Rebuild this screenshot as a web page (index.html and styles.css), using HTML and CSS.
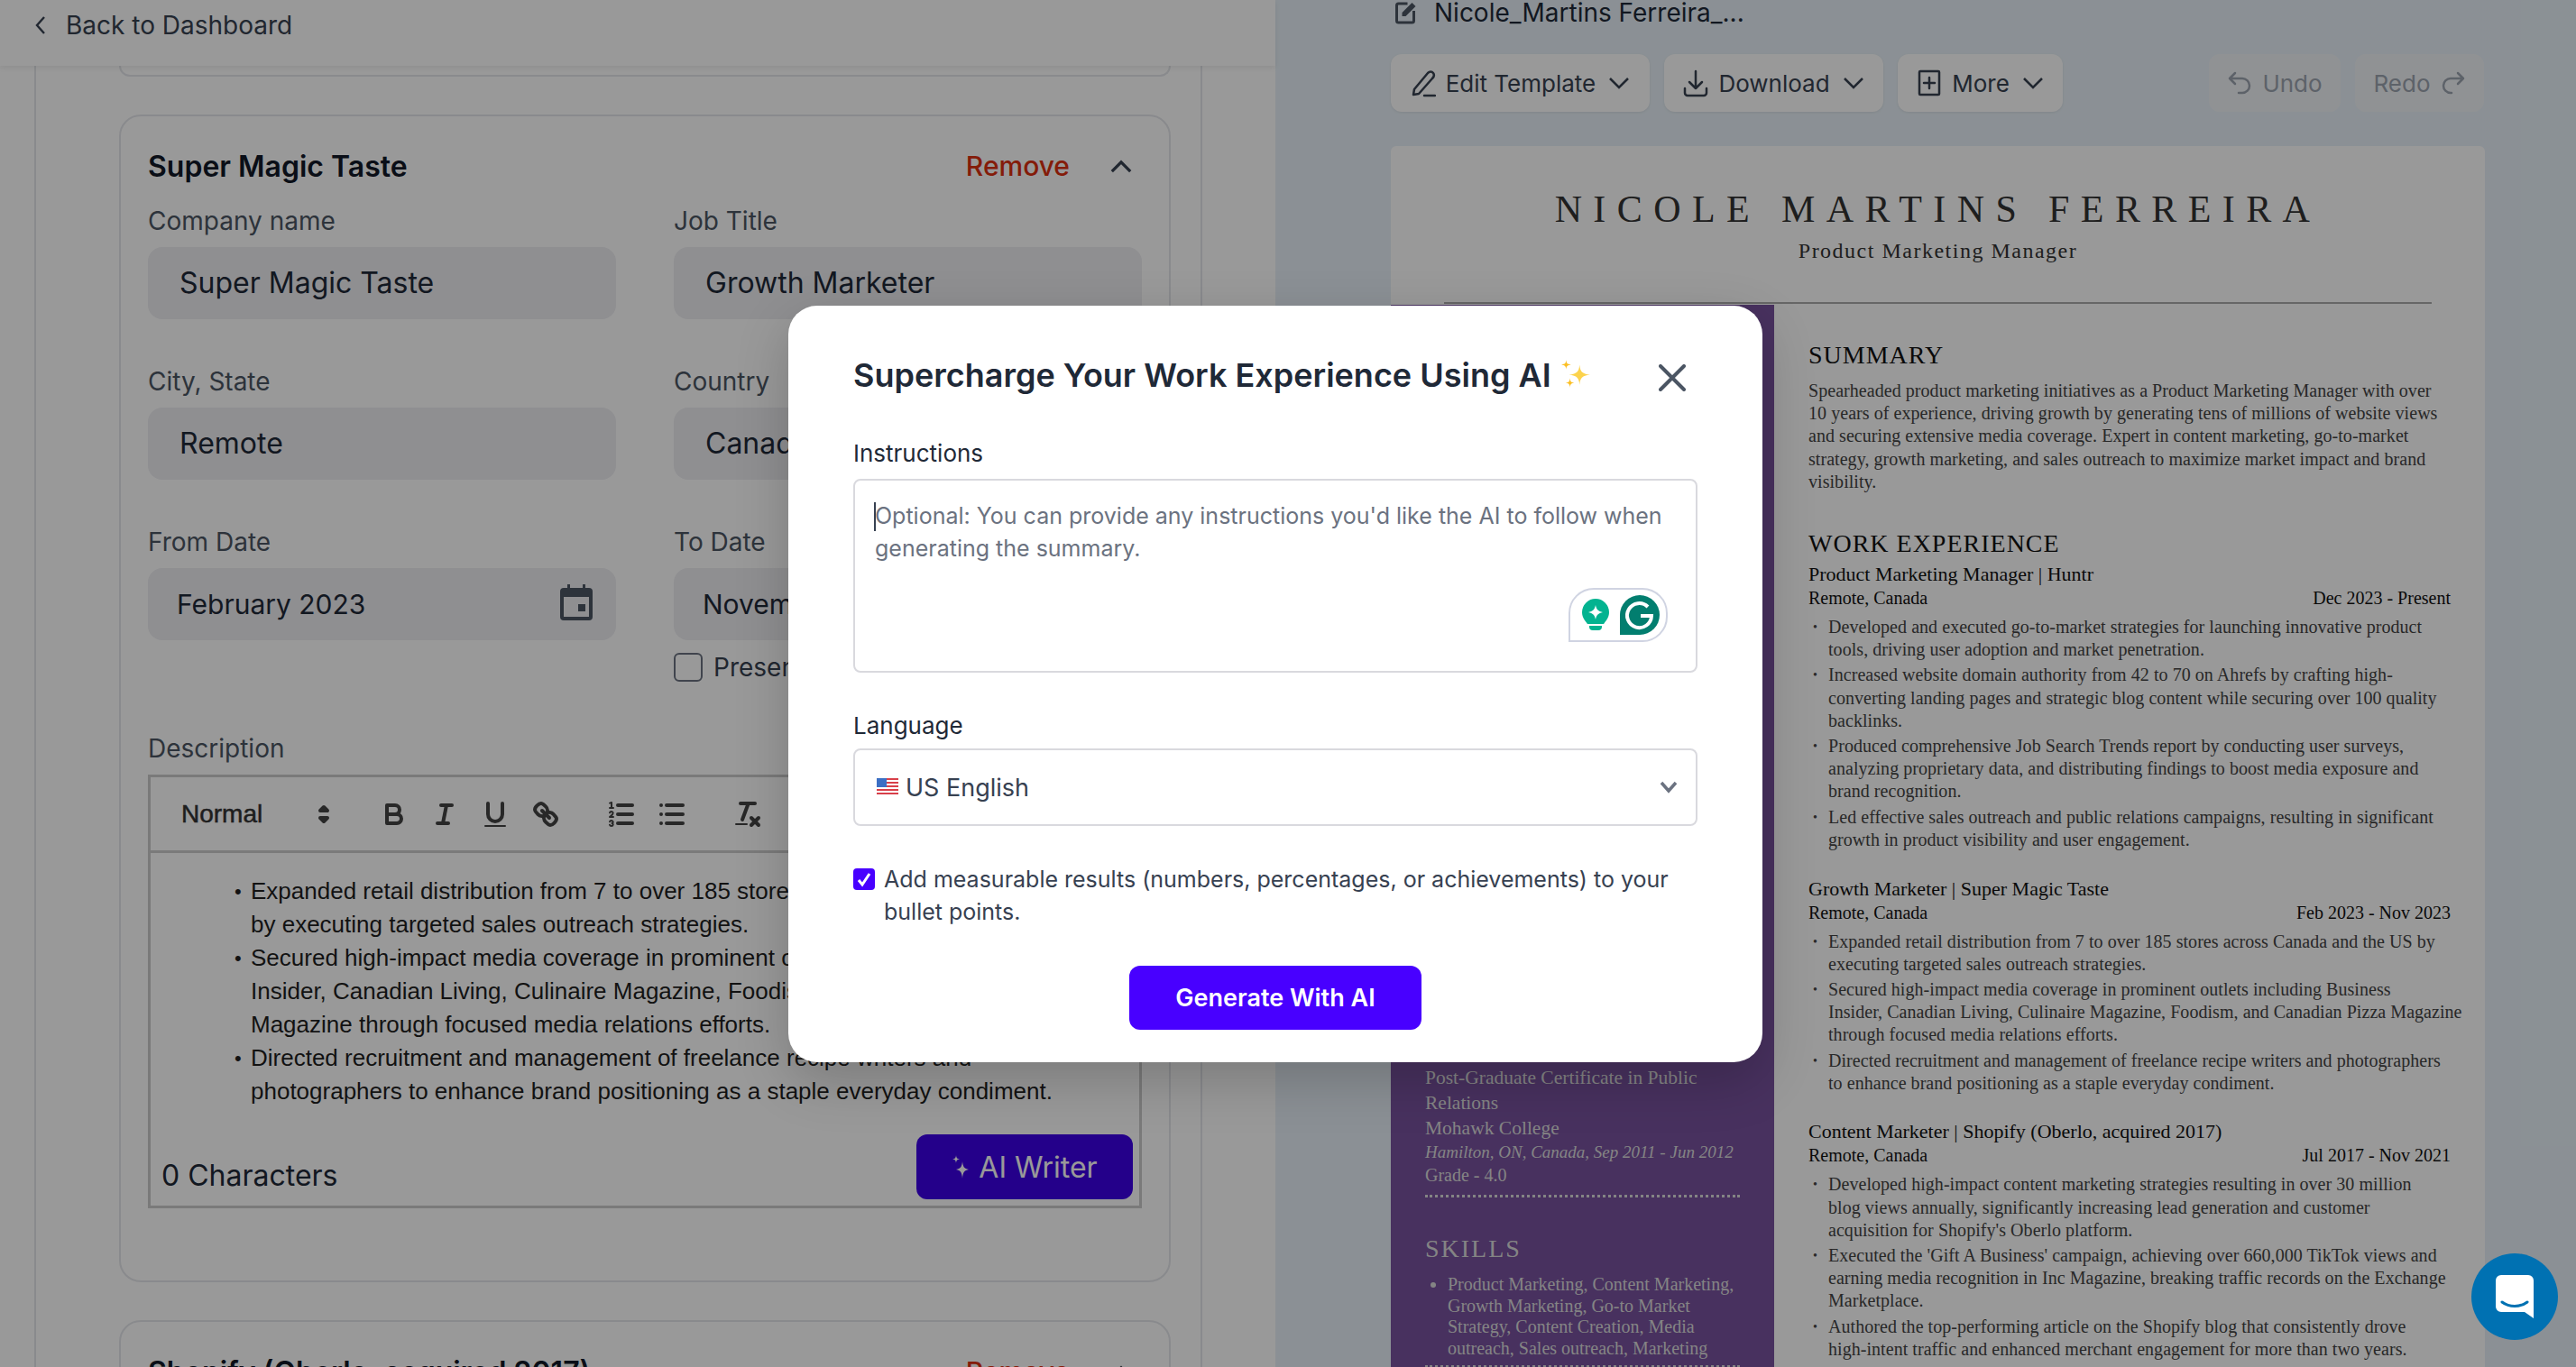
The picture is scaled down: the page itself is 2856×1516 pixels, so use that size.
FILE: index.html
```html
<!DOCTYPE html>
<html>
<head>
<meta charset="UTF-8">
<title>Resume Builder</title>
<link rel="stylesheet" href="styles.css">
</head>
<body>

<div class="app">

	<!-- left : form -->
	<div class="left">
		<div class="topbar">
			<svg class="back-icon" viewBox="0 0 16 28"><path d="M12 5 4 14l8 9"/></svg>
			<span>Back to Dashboard</span>
		</div>
		<div class="panel">
			<div class="card card-prev"></div>

			<div class="card">
				<div class="card-head">
					<div class="card-title">Super Magic Taste</div>
					<div class="remove">Remove</div>
					<svg class="card-chevron" viewBox="0 0 28 16"><path d="M3 14 14 3l11 11"/></svg>
				</div>
				<div class="fields">
					<div class="field">
						<div class="label">Company name</div>
						<div class="input">Super Magic Taste</div>
					</div>
					<div class="field">
						<div class="label">Job Title</div>
						<div class="input">Growth Marketer</div>
					</div>
					<div class="field">
						<div class="label">City, State</div>
						<div class="input">Remote</div>
					</div>
					<div class="field">
						<div class="label">Country</div>
						<div class="input">Canada</div>
					</div>
					<div class="field">
						<div class="label">From Date</div>
						<div class="input input-date">February 2023
							<svg class="cal-icon" viewBox="0 0 36 40"><path d="M8 0v4H4a4 4 0 0 0-4 4v28a4 4 0 0 0 4 4h28a4 4 0 0 0 4-4V8a4 4 0 0 0-4-4h-4V0h-3v4H11V0zM4 14h28v22H4z"/><rect x="20" y="22" width="8" height="8"/></svg>
						</div>
					</div>
					<div class="field">
						<div class="label">To Date</div>
						<div class="input input-date">November 2023</div>
						<div class="present"><span class="present-box"></span>Present</div>
					</div>
				</div>

				<div class="label label-desc">Description</div>
				<div class="editor">
					<div class="ql-bar">
						<div class="ql-picker">
							<span>Normal</span>
							<svg class="ql" viewBox="0 0 18 18"><polygon points="7 11 9 13 11 11 7 11"/><polygon points="7 7 9 5 11 7 7 7"/></svg>
						</div>
						<div class="ql-group">
							<svg class="ql" viewBox="0 0 18 18"><path d="M5,4H9.5A2.5,2.5,0,0,1,12,6.5v0A2.5,2.5,0,0,1,9.5,9H5A0,0,0,0,1,5,9V4A0,0,0,0,1,5,4Z"/><path d="M5,9h5.5A2.5,2.5,0,0,1,13,11.5v0A2.5,2.5,0,0,1,10.5,14H5a0,0,0,0,1,0,0V9A0,0,0,0,1,5,9Z"/></svg>
							<svg class="ql" viewBox="0 0 18 18"><line x1="7" x2="13" y1="4" y2="4"/><line x1="5" x2="11" y1="14" y2="14"/><line x1="8" x2="10" y1="14" y2="4"/></svg>
							<svg class="ql" viewBox="0 0 18 18"><path d="M5,3V9a4.012,4.012,0,0,0,4,4H9a4.012,4.012,0,0,0,4-4V3"/><rect class="ql-fill" height="1" rx=".5" ry=".5" width="12" x="3" y="15"/></svg>
							<svg class="ql" viewBox="0 0 18 18"><line x1="7" x2="11" y1="7" y2="11"/><path d="M8.9,4.577a3.476,3.476,0,0,1,.36,4.679A3.476,3.476,0,0,1,4.577,8.9C3.185,7.5,2.035,6.4,4.217,4.217S7.5,3.185,8.9,4.577Z"/><path d="M13.423,9.1a3.476,3.476,0,0,0-4.679-.36,3.476,3.476,0,0,0,.36,4.679c1.392,1.392,2.5,2.542,4.679.36S14.815,10.5,13.423,9.1Z"/></svg>
						</div>
						<div class="ql-group">
							<svg class="ql" viewBox="0 0 18 18"><line x1="7" x2="15" y1="4" y2="4"/><line x1="7" x2="15" y1="9" y2="9"/><line x1="7" x2="15" y1="14" y2="14"/><line class="ql-thin" x1="2.5" x2="4.5" y1="5.5" y2="5.5"/><path class="ql-fill" d="M3.5,6A0.5,0.5,0,0,1,3,5.5V3.085l-0.276.138A0.5,0.5,0,0,1,2.053,3c-0.124-.247-0.023-0.324.224-0.447l1-.5A0.5,0.5,0,0,1,4,2.5v3A0.5,0.5,0,0,1,3.5,6Z"/><path class="ql-thin" d="M4.5,10.5h-2c0-.234,1.85-1.076,1.85-2.234A0.959,0.959,0,0,0,2.5,8.156"/><path class="ql-thin" d="M2.5,14.846a0.959,0.959,0,0,0,1.85-.109A0.7,0.7,0,0,0,3.75,14a0.688,0.688,0,0,0,.6-0.736,0.959,0.959,0,0,0-1.85-.109"/></svg>
							<svg class="ql" viewBox="0 0 18 18"><line x1="6" x2="15" y1="4" y2="4"/><line x1="6" x2="15" y1="9" y2="9"/><line x1="6" x2="15" y1="14" y2="14"/><line x1="3" x2="3" y1="4" y2="4"/><line x1="3" x2="3" y1="9" y2="9"/><line x1="3" x2="3" y1="14" y2="14"/></svg>
						</div>
						<div class="ql-group">
							<svg class="ql" viewBox="0 0 18 18"><line x1="5" x2="13" y1="3" y2="3"/><line x1="6" x2="9.35" y1="12" y2="3"/><line x1="11" x2="15" y1="11" y2="15"/><line x1="15" x2="11" y1="11" y2="15"/><rect class="ql-fill" height="1" rx=".5" ry=".5" width="7" x="2" y="14"/></svg>
						</div>
					</div>
					<div class="ql-body">
						<ul class="ql-list">
							<li>Expanded retail distribution from 7 to over 185 stores across Canada and the US<br>by executing targeted sales outreach strategies.</li>
							<li>Secured high-impact media coverage in prominent outlets including Business<br>Insider, Canadian Living, Culinaire Magazine, Foodism, and Canadian Pizza<br>Magazine through focused media relations efforts.</li>
							<li>Directed recruitment and management of freelance recipe writers and<br>photographers to enhance brand positioning as a staple everyday condiment.</li>
						</ul>
						<div class="ql-foot">
							<div class="char-count">0 Characters</div>
							<div class="ai-writer">
								<svg class="ai-icon" viewBox="0 0 20 28"><path d="M12 8c.6 6 2 8 7 9-5 1-6.400 3-7 10-.6-7-2-9-7-10 5-1 6.400-3 7-9zM5 1c.3 3 1 4 4 4.500C6 6 5.300 7 5 10c-.3-3-1-4-4-4.500C4 5 4.700 4 5 1z"/></svg>
								AI Writer
							</div>
						</div>
					</div>
				</div>
			</div>

			<div class="card">
				<div class="card-head">
					<div class="card-title">Shopify (Oberlo, acquired 2017)</div>
					<div class="remove">Remove</div>
					<svg class="card-chevron" viewBox="0 0 28 16"><path d="M3 14 14 3l11 11"/></svg>
				</div>
			</div>
		</div>
	</div>

	<!-- right : preview -->
	<div class="right">
		<div class="file-row">
			<svg class="file-icon" viewBox="0 0 24 28"><path class="file-box" d="M14 5H4a2 2 0 0 0-2 2v17a2 2 0 0 0 2 2h15a2 2 0 0 0 2-2V13"/><path class="file-pen" d="M8 19v-4L19 4l4 4-11 11z"/></svg>
			<span>Nicole_Martins Ferreira_...</span>
		</div>

		<div class="actions">
			<div class="act-btn btn-edit">
				<svg class="act-icon" viewBox="0 0 28 32"><path d="M3 29l1-6L19 5c2-2 4.500-2 6 0s1 4-1 6L9 28z"/><path d="M15 30h12"/></svg>
				Edit Template
				<svg class="act-chev" viewBox="0 0 24 14"><path d="M2 2l10 10L22 2"/></svg>
			</div>
			<div class="act-btn btn-down">
				<svg class="act-icon" viewBox="0 0 28 32"><path d="M14 3v19M7 15l7 7 7-7M2 22v5a3 3 0 0 0 3 3h18a3 3 0 0 0 3-3v-5"/></svg>
				Download
				<svg class="act-chev" viewBox="0 0 24 14"><path d="M2 2l10 10L22 2"/></svg>
			</div>
			<div class="act-btn btn-more">
				<svg class="act-icon" viewBox="0 0 28 32"><rect x="3" y="3" width="22" height="26" rx="1"/><path d="M14 10v12M8 16h12"/></svg>
				More
				<svg class="act-chev" viewBox="0 0 24 14"><path d="M2 2l10 10L22 2"/></svg>
			</div>
			<div class="act-space"></div>
			<div class="act-btn act-off btn-undo">
				<svg class="act-icon" viewBox="0 0 28 32"><path d="M9 5 3 11l6 6M3 11h14a8 8 0 0 1 8 8v0a8 8 0 0 1-8 8h-4"/></svg>
				Undo
			</div>
			<div class="act-btn act-off btn-redo">
				Redo
				<svg class="act-icon" viewBox="0 0 28 32"><path d="M19 5l6 6-6 6M25 11H11a8 8 0 0 0-8 8v0a8 8 0 0 0 8 8h1"/></svg>
			</div>
		</div>

		<div class="sheet">
			<div class="sheet-head">
				<div class="res-name">NICOLE MARTINS FERREIRA</div>
				<div class="res-role">Product Marketing Manager</div>
				<div class="res-rule"></div>
			</div>
			<div class="sheet-body">
				<div class="side">
					<div class="edu">Post-Graduate Certificate in Public<br>Relations<br>Mohawk College</div>
					<div class="edu-place">Hamilton, ON, Canada, Sep 2011 - Jun 2012</div>
					<div class="edu-grade">Grade - 4.0</div>
					<div class="side-rule"></div>
					<div class="side-title">SKILLS</div>
					<ul class="skills">
						<li>Product Marketing, Content Marketing,<br>Growth Marketing, Go-to Market<br>Strategy, Content Creation, Media<br>outreach, Sales outreach, Marketing</li>
					</ul>
					<div class="side-rule side-rule2"></div>
				</div>
				<div class="main">
					<h2 class="sec-title">SUMMARY</h2>
					<p class="summary">Spearheaded product marketing initiatives as a Product Marketing Manager with over<br>10 years of experience, driving growth by generating tens of millions of website views<br>and securing extensive media coverage. Expert in content marketing, go-to-market<br>strategy, growth marketing, and sales outreach to maximize market impact and brand<br>visibility.</p>

					<h2 class="sec-title sec-work">WORK EXPERIENCE</h2>
					<div class="job">
						<div class="job-title">Product Marketing Manager | Huntr</div>
						<div class="job-meta"><span>Remote, Canada</span><span>Dec 2023 - Present</span></div>
						<ul class="job-list">
							<li>Developed and executed go-to-market strategies for launching innovative product<br>tools, driving user adoption and market penetration.</li>
							<li>Increased website domain authority from 42 to 70 on Ahrefs by crafting high-<br>converting landing pages and strategic blog content while securing over 100 quality<br>backlinks.</li>
							<li>Produced comprehensive Job Search Trends report by conducting user surveys,<br>analyzing proprietary data, and distributing findings to boost media exposure and<br>brand recognition.</li>
							<li>Led effective sales outreach and public relations campaigns, resulting in significant<br>growth in product visibility and user engagement.</li>
						</ul>
					</div>
					<div class="job">
						<div class="job-title">Growth Marketer | Super Magic Taste</div>
						<div class="job-meta"><span>Remote, Canada</span><span>Feb 2023 - Nov 2023</span></div>
						<ul class="job-list">
							<li>Expanded retail distribution from 7 to over 185 stores across Canada and the US by<br>executing targeted sales outreach strategies.</li>
							<li>Secured high-impact media coverage in prominent outlets including Business<br>Insider, Canadian Living, Culinaire Magazine, Foodism, and Canadian Pizza Magazine<br>through focused media relations efforts.</li>
							<li>Directed recruitment and management of freelance recipe writers and photographers<br>to enhance brand positioning as a staple everyday condiment.</li>
						</ul>
					</div>
					<div class="job">
						<div class="job-title">Content Marketer | Shopify (Oberlo, acquired 2017)</div>
						<div class="job-meta"><span>Remote, Canada</span><span>Jul 2017 - Nov 2021</span></div>
						<ul class="job-list">
							<li>Developed high-impact content marketing strategies resulting in over 30 million<br>blog views annually, significantly increasing lead generation and customer<br>acquisition for Shopify's Oberlo platform.</li>
							<li>Executed the 'Gift A Business' campaign, achieving over 660,000 TikTok views and<br>earning media recognition in Inc Magazine, breaking traffic records on the Exchange<br>Marketplace.</li>
							<li>Authored the top-performing article on the Shopify blog that consistently drove<br>high-intent traffic and enhanced merchant engagement for more than two years.</li>
						</ul>
					</div>
				</div>
			</div>
		</div>
	</div>
</div>

<div class="overlay"></div>

<!-- modal -->
<div class="modal">
	<div class="modal-head">
		<div class="modal-title">Supercharge Your Work Experience Using AI</div>
		<svg class="sparkles" viewBox="0 0 32 32"><path class="spark-a" d="M20 6c.6 7 2.500 9.500 11 10.500-8.500 1-10.400 3.500-11 10.500-.6-7-2.500-9.500-11-10.500C17.500 15.500 19.400 13 20 6z"/><path class="spark-b" d="M6 1c.3 3.500 1 4.600 5 5-4 .5-4.700 1.600-5 5-.3-3.400-1-4.500-5-5 4-.4 4.700-1.500 5-5zM10 20c.3 3.500 1 4.600 4.500 5-3.500.5-4.200 1.600-4.500 5-.3-3.400-1-4.500-4.500-5 3.500-.4 4.200-1.500 4.500-5z"/></svg>
		<svg class="close-icon" viewBox="0 0 30 30"><path d="M2 2l26 26M28 2 2 28"/></svg>
	</div>

	<div class="m-label">Instructions</div>
	<div class="m-text">
		<span class="caret"></span>Optional: You can provide any instructions you'd like the AI to follow when generating the summary.
		<div class="gram">
			<svg class="gram-bulb" viewBox="0 0 30 36"><path d="M15 0a15 15 0 0 1 15 15c0 6-4 10-6 13H6C4 25 0 21 0 15A15 15 0 0 1 15 0z"/><path d="M8 30h14v1a4 4 0 0 1-4 4h-6a4 4 0 0 1-4-4z"/><path class="gram-star" d="M15 7c1 5 3 7 8 8-5 1-7 3-8 8-1-5-3-7-8-8 5-1 7-3 8-8z"/></svg>
			<svg class="gram-g" viewBox="0 0 44 44"><path d="M22 0a22 22 0 0 1 0 44H0V22A22 22 0 0 1 22 0z"/><path class="gram-gline" d="M31 13a13.500 13.500 0 1 0 4 10h-12"/></svg>
		</div>
	</div>

	<div class="m-label m-label2">Language</div>
	<div class="m-select">
		<svg class="flag" viewBox="0 0 24 20"><rect width="24" height="20" fill="#fff"/><path d="M0 0h24v2H0zM0 4h24v2H0zM0 8h24v2H0zM0 12h24v2H0zM0 16h24v2H0z" fill="#d8404a"/><rect width="11" height="10" fill="#3b6fc4"/></svg>
		<span class="m-select-text">US English</span>
		<svg class="select-chev" viewBox="0 0 20 14"><path d="M2 2l8 9 8-9"/></svg>
	</div>

	<div class="m-check">
		<span class="check-box"><svg viewBox="0 0 24 24"><path d="M6 13l4 5 8-12"/></svg></span>
		<div class="check-text">Add measurable results (numbers, percentages, or achievements) to your bullet points.</div>
	</div>

	<div class="m-foot"><div class="generate">Generate With AI</div></div>
</div>

<div class="chat">
	<svg viewBox="0 0 42 48"><path class="chat-body" d="M6 0h30a6 6 0 0 1 6 6v42l-10-7H6a6 6 0 0 1-6-6V6a6 6 0 0 1 6-6z"/><path class="chat-smile" d="M7 30c8 6 20 6 28 0"/></svg>
</div>

</body>
</html>
```

FILE: styles.css
```css
* {box-sizing: border-box;}
html, body {margin: 0; padding: 0;}
body {width: 2856px; height: 1516px; overflow: hidden; position: relative; font-family: Inter, "Liberation Sans", sans-serif; color: #1f2937; background-color: #fff;}

.app {display: flex; height: 1516px; overflow: hidden;}

/* left */
.left {width: 1414px; flex: none; background-color: #fff; position: relative;}
.topbar {height: 73px; display: flex; align-items: center; padding: 0 37px 18px; gap: 20px; font-size: 28px; color: #374151; background-color: #fff; box-shadow: 0 2px 6px rgba(0,0,0,.08); position: relative;}
.back-icon {width: 16px; height: 28px; fill: none; stroke: #374151; stroke-width: 2.4;}

.panel {margin-left: 38px; width: 1295px; padding: 0 33px 0 92px; border-left: 2px solid #e5e7eb; border-right: 2px solid #e5e7eb; height: 1443px;}
.card {border: 2px solid #e5e7eb; border-radius: 24px; padding: 0 30px; margin-bottom: 42px; height: 1295px;}
.card-prev {height: 12px; border-top: 0; border-radius: 0 0 24px 24px;}
.card-head {display: flex; align-items: center; height: 48px; margin-top: 31px;}
.card-title {font-size: 32px; font-weight: 600; color: #111827; flex: 1;}
.remove {font-size: 30px; font-weight: 500; color: #dc2f10;}
.card-chevron {width: 26px; height: 15px; margin-left: 44px; margin-right: 10px; fill: none; stroke: #374151; stroke-width: 3.500;}

.fields {display: grid; grid-template-columns: 519px 519px; column-gap: 64px; row-gap: 52px; margin-top: 20px;}
.label {font-size: 28px; line-height: 34px; margin-bottom: 12px; color: #4b5563;}
.input {height: 80px; border-radius: 16px; background-color: #eeeef2; padding: 0 35px; font-size: 32px; line-height: 80px; position: relative; white-space: nowrap;}
.input-date {padding-left: 32px; font-size: 30px;}
.cal-icon {position: absolute; right: 26px; top: 18px; width: 36px; height: 40px; fill: #4b5563;}
.present {display: flex; align-items: center; gap: 12px; margin-top: 13px; font-size: 28px; color: #374151;}
.present-box {width: 32px; height: 32px; border: 2px solid #6b7280; border-radius: 6px;}

.label-desc {margin-top: 56px; margin-bottom: 12px;}
.editor {border: 3px solid #ccc;}
.ql-bar {height: 84px; display: flex; align-items: center; padding-left: 18px; border-bottom: 3px solid #ccc; font-family: "Liberation Sans", Arial, sans-serif;}
.ql-picker {width: 196px; display: flex; align-items: center; justify-content: space-between; padding-left: 16px; padding-right: 4px; font-size: 28px; font-weight: 500; color: #333; -webkit-text-stroke: .5px #333; flex: none;}
.ql-group {display: flex; margin-left: 28px; flex: none;}
.ql {width: 36px; height: 36px; margin: 0 10px; fill: none; stroke: #444; stroke-width: 2; stroke-linecap: round; stroke-linejoin: round; flex: none;}
.ql-picker .ql {margin: 0;}
.ql-fill {fill: #444; stroke: none;}
.ql-thin {stroke-width: 1;}

.ql-body {height: 391px; display: flex; flex-direction: column; justify-content: space-between;}
.ql-list {margin: 0; padding: 24px 0 0 111px; list-style: none; font-family: "Liberation Sans", Arial, sans-serif; font-size: 26px; line-height: 37px; white-space: nowrap; color: #1f1f1f;}
.ql-list li {position: relative;}
.ql-list li:before {content: "•"; position: absolute; left: -18px; font-size: 22px;}
.ql-foot {display: flex; justify-content: space-between; align-items: flex-end; padding: 0 7px 7px 12px;}
.char-count {font-size: 32px; color: #1f2937; padding-bottom: 7px;}
.ai-writer {width: 240px; height: 72px; border-radius: 12px; background-color: #3c00e6; color: #fff; font-size: 32px; font-weight: 400; display: flex; align-items: center; justify-content: center; gap: 10px;}
.ai-icon {width: 20px; height: 28px; fill: #fff;}

/* right */
.right {flex: 1; background-color: #e8f1f8; padding-left: 128px; min-width: 0;}
.file-row {height: 28px; display: flex; align-items: center; gap: 19px; padding-left: 4px; font-size: 28px; color: #1f2937;}
.file-icon {width: 25px; height: 28px; margin-top: -2px; fill: none;}
.file-box {stroke: #4b5563; stroke-width: 3;}
.file-pen {fill: #4b5563;}
.actions {display: flex; gap: 16px; margin-top: 32px; width: 1212px;}
.act-btn {height: 64px; border-radius: 12px; background-color: #fff; box-shadow: 0 1px 3px rgba(0,0,0,.08); display: flex; align-items: center; justify-content: center; font-size: 26px; color: #374151; gap: 11px;}
.act-icon {width: 28px; height: 32px; fill: none; stroke: #374151; stroke-width: 2.500; stroke-linecap: round; stroke-linejoin: round;}
.act-chev {width: 24px; height: 14px; fill: none; stroke: #374151; stroke-width: 2.500; margin-left: 3px;}
.btn-edit {width: 287px;}
.btn-down {width: 243px;}
.btn-more {width: 183px;}
.act-space {flex: 1;}
.btn-undo {width: 146px;}
.btn-redo {width: 143px;}
.act-off {background-color: #f1f4f7; color: #9ca3af; box-shadow: none;}
.act-off .act-icon {stroke: #9ca3af;}

.sheet {margin-top: 38px; width: 1213px; height: 1400px; background-color: #fff; border-radius: 6px 6px 0 0; font-family: "Liberation Serif", serif; color: #333;}
.sheet-head {height: 176px; position: relative; text-align: center; padding-top: 46px;}
.res-name {font-size: 42px; line-height: 48px; letter-spacing: 12.4px; color: #333; white-space: nowrap;}
.res-role {font-size: 24px; line-height: 30px; margin-top: 7px; letter-spacing: 1.5px;}
.res-rule {margin: 42px 59px 0; height: 2px; background-color: #aaa;}
.sheet-body {display: flex;}
.side {width: 425px; height: 1224px; flex: none; background-color: #78529f; padding: 843px 38px 0; color: #ddd; font-size: 20px;}
.edu {line-height: 28px; font-size: 21.5px; white-space: nowrap;}
.edu-place {font-style: italic; line-height: 26px; font-size: 19px; white-space: nowrap;}
.edu-grade {line-height: 25px;}
.side-rule {border-top: 3px dotted #ddd; margin-top: 9px;}
.side-title {font-size: 28px; line-height: 34px; letter-spacing: 2px; margin-top: 40px;}
.skills {margin: 11px 0 0; padding: 0 0 0 25px; line-height: 23.7px; white-space: nowrap;}
.side-rule2 {margin-top: 6px;}

.main {flex: 1; padding: 39px 38px 0; min-width: 0;}
.sec-title {font-size: 28px; line-height: 34px; font-weight: 400; margin: 0; letter-spacing: 1px; color: #111;}
.summary {margin: 10px 0 0; font-size: 20px; line-height: 25.2px; letter-spacing: .05px; color: #444; white-space: nowrap;}
.sec-work {margin-top: 38.500px;}
.job {margin-bottom: 27.500px;}
.sec-work + .job {margin-top: 3.500px;}
.job-title {font-size: 22px; line-height: 27px; color: #111;}
.job-meta {font-size: 20px; line-height: 27px; color: #111; display: flex; justify-content: space-between;}
.job-list {margin: 6px 0 0; padding: 0 0 0 22px; list-style: none; font-size: 20px; line-height: 25.2px; letter-spacing: .05px; color: #444; white-space: nowrap;}
.job-list li {position: relative; margin-bottom: 3px;}
.job-list li:before {content: "•"; position: absolute; left: -17px; font-size: 14px;}

.overlay {position: absolute; left: 0; top: 0; width: 2856px; height: 1516px; background-color: rgba(0,0,0,.4);}

/* modal */
.modal {position: absolute; left: 874px; top: 339px; width: 1080px; height: 839px; padding: 48px 72px 0; background-color: #fff; border-radius: 32px; box-shadow: 0 20px 60px rgba(0,0,0,.2);}
.modal-head {height: 58px; display: flex; align-items: center;}
.modal-title {font-size: 36px; font-weight: 600; color: #1f2937; white-space: nowrap;}
.sparkles {width: 34px; height: 34px; margin-left: 10px; margin-top: -2px;}
.spark-a {fill: #fcd34d;}
.spark-b {fill: #fbbf24;}
.close-icon {width: 30px; height: 30px; margin-left: auto; margin-right: 13px; margin-top: 6px; fill: none; stroke: #4b5563; stroke-width: 4; stroke-linecap: round;}
.m-label {margin-top: 41px; font-size: 26px; line-height: 34px; margin-bottom: 11px; color: #1f2937;}
.m-label2 {margin-top: 42px; margin-bottom: 8px;}
.m-text {position: relative; height: 215px; border: 2px solid #d9d9de; border-radius: 8px; padding: 21px 22px; font-size: 25px; line-height: 36px; color: #6b7280;}
.caret {display: inline-block; width: 0; height: 32px; border-left: 2px solid #374151; vertical-align: -8px; margin-left: -1px; margin-right: -1px;}
.gram {position: absolute; right: 31px; bottom: 32px; width: 110px; height: 60px; border: 2px solid #d0d4e2; border-radius: 28px 28px 28px 0; display: flex; align-items: center; padding-left: 13px; gap: 12px;}
.gram-bulb {width: 30px; height: 36px; fill: #03b390; flex: none;}
.gram-star {fill: #fff;}
.gram-g {width: 44px; height: 44px; fill: #027e6f; flex: none;}
.gram-gline {fill: none; stroke: #fff; stroke-width: 4;}

.m-select {height: 86px; border: 2px solid #d9d9de; border-radius: 8px; display: flex; align-items: center; padding: 0 20px 0 24px; font-size: 27px; color: #374151;}
.flag {width: 24px; height: 20px; flex: none; margin-right: 8px;}
.m-select-text {flex: 1;}
.select-chev {width: 20px; height: 14px; fill: none; stroke: #6b7280; stroke-width: 3.500;}

.m-check {display: flex; margin-top: 41px; font-size: 25px; line-height: 36px; color: #374151;}
.check-box {width: 24px; height: 24px; margin-top: 6px; margin-right: 10px; flex: none; border-radius: 4px; background-color: #4800ff;}
.check-box svg {display: block; fill: none; stroke: #fff; stroke-width: 3;}
.check-text {flex: 1;}
.m-foot {display: flex; justify-content: center; margin-top: 42px;}
.generate {width: 324px; height: 71px; border-radius: 12px; background-color: #4800ff; color: #fff; font-size: 27px; font-weight: 600; line-height: 71px; text-align: center;}

.chat {position: absolute; left: 2740px; top: 1390px; width: 96px; height: 96px; border-radius: 50%; background-color: #0071b2; display: flex; align-items: center; justify-content: center;}
.chat svg {width: 42px; height: 48px;}
.chat-body {fill: #fff;}
.chat-smile {fill: none; stroke: #0071b2; stroke-width: 3; stroke-linecap: round;}
```
